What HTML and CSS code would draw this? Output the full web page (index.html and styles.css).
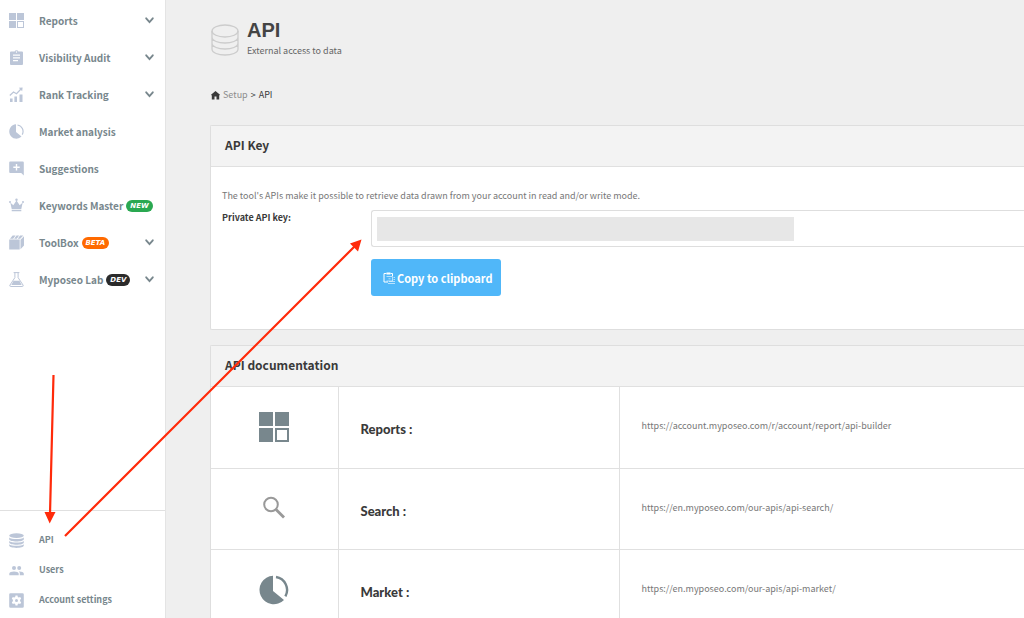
FILE: index.html
```html
<!DOCTYPE html>
<html lang="en">
<head>
  <meta charset="UTF-8" />
  <meta name="viewport" content="width=device-width, initial-scale=1.0"/>
  <title>API - Setup</title>
  <link rel="stylesheet" href="styles.css">
</head>
<body>

  <!-- shared icons -->
  <svg class="defs" aria-hidden="true">
    <symbol id="i-reports" viewBox="0 0 30 30">
      <path d="M0 0h14v14H0zM16 0h14v14H16zM0 16h14v14H0z"/>
      <path fill-rule="evenodd" d="M16 16h14v14H16zm2 2v10h10V18z"/>
    </symbol>
    <symbol id="i-pie" viewBox="0 0 30 30">
      <path d="M14 0.700V16L25 25A14.300 14.300 0 1 1 14 0.700z"/>
      <path d="M17 2A13.100 13.100 0 0 1 26.400 21.300" fill="none" stroke="currentColor" stroke-width="2.400"/>
    </symbol>
    <symbol id="i-chevron" viewBox="0 0 10 10">
      <path d="M2 3l3 3.400L8 3" fill="none" stroke="currentColor" stroke-width="1.700" stroke-linecap="round"/>
    </symbol>
  </svg>

  <div class="app">
    <aside class="sidebar">
      <nav class="menu">
        <a href="#"><svg class="icon"><use href="#i-reports"/></svg>Reports<svg class="chevron"><use href="#i-chevron"/></svg></a>
        <a href="#">
          <svg class="icon" viewBox="0 0 15 15"><path fill-rule="evenodd" d="M2 1.600h3.600a2 2 0 0 1 3.800 0H13a1 1 0 0 1 1 1V14a1 1 0 0 1-1 1H2a1 1 0 0 1-1-1V2.600a1 1 0 0 1 1-1zM4 4.500v1.300h7V4.500zM4 7.200v1.300h7V7.200zM4 10v1.300h5V10zM7.500 1.300a.7.7 0 1 0 .01 0z"/></svg>Visibility Audit<svg class="chevron"><use href="#i-chevron"/></svg></a>
        <a href="#">
          <svg class="icon" viewBox="0 0 15 15"><path d="M1 11.500h2.600V15H1zM5.400 9.500H8V15H5.400zM10.500 7.500h3V15h-3z"/><path d="M.8 8.500L4.500 5l3 1.700L12 2" fill="none" stroke="currentColor" stroke-width="1.200"/><path d="M9.800.8L13.600.4l-.4 3.800z"/></svg>Rank Tracking<svg class="chevron"><use href="#i-chevron"/></svg></a>
        <a href="#"><svg class="icon"><use href="#i-pie"/></svg>Market analysis</a>
        <a href="#">
          <svg class="icon" viewBox="0 0 15 15"><path fill-rule="evenodd" d="M1.200.500h12.600a1 1 0 0 1 1 1V14.500l-2.600-2.600H1.200a1 1 0 0 1-1-1V1.500a1 1 0 0 1 1-1zM6.800 3v2.500H4.300v1.400h2.500v2.500h1.400V6.900h2.500V5.500H8.200V3z"/></svg>Suggestions</a>
        <a href="#">
          <svg class="icon" viewBox="0 0 15 15"><path d="M1.300 4.600l3 2.600L7.500 2.500l3.200 4.700 3-2.600-1.400 6.300H2.700zM2.700 11.700h9.600v1.500H2.700z"/><circle cx="1" cy="4" r="1"/><circle cx="7.500" cy="1.800" r="1.200"/><circle cx="14" cy="4" r="1"/></svg>Keywords Master<span class="tag tag-new">NEW</span></a>
        <a href="#">
          <svg class="icon" viewBox="0 0 15 15"><path d="M.2 4.600h10.500V14.500H.2zM1 3.800L3.600.600h3L4.200 3.800zM5.200 3.800L7.500.600h2.600L7.800 3.800zM8.800 3.800L11 .600h3.300L11.200 3.800zM11.500 4.800L15 1.200v9.300l-3.500 3.700z"/></svg>ToolBox<span class="tag tag-beta">BETA</span><svg class="chevron"><use href="#i-chevron"/></svg></a>
        <a href="#">
          <svg class="icon" viewBox="0 0 15 15"><path d="M4.600.600h5.800M5.900.600v5L1 13a1 1 0 0 0 .8 1.500h11.400A1 1 0 0 0 14 13L9.100 5.600v-5" fill="none" stroke="currentColor"/><path d="M4.600 8.800h5.800l2.300 4.200H2.300z"/></svg>Myposeo Lab<span class="tag tag-dev">DEV</span><svg class="chevron"><use href="#i-chevron"/></svg></a>
      </nav>

      <nav class="menu menu-bottom">
        <a href="#">
          <svg class="icon" viewBox="0 0 15 15"><ellipse cx="7.500" cy="2.600" rx="7.300" ry="2.400"/><path d="M.2 4.400c2 2 12.600 2 14.600 0v1.800c0 3-14.600 3-14.600 0zM.2 8c2 2 12.600 2 14.600 0v1.500c0 3-14.600 3-14.600 0zM.2 11.200c2 2 12.600 2 14.600 0v1.300c0 3.200-14.600 3.200-14.600 0z"/></svg>API</a>
        <a href="#">
          <svg class="icon" viewBox="0 0 15 15"><circle cx="5" cy="5" r="2"/><circle cx="10.200" cy="5" r="2"/><path d="M.3 12.200V10.500C.3 7.700 9.700 7.700 9.700 10.500v1.700zM10.800 12.200v-1.700c0-.9-.4-1.500-1-2 2.300-.2 5 .5 5 2v1.700z"/></svg>Users</a>
        <a href="#">
          <svg class="icon" viewBox="0 0 15 15"><path fill-rule="evenodd" d="M1.500.200h12a1.300 1.300 0 0 1 1.300 1.300v12a1.300 1.300 0 0 1-1.300 1.300h-12A1.300 1.300 0 0 1 .2 13.500v-12A1.300 1.300 0 0 1 1.500.200zM6.500 2.500l-.3 1.400-1 .6-1.400-.5-1 1.800L3.900 6.800v1.400L2.800 9.200l1 1.800 1.400-.5 1 .6.3 1.400h2l.3-1.400 1-.6 1.400.5 1-1.800-1.100-1V6.800l1.100-1-1-1.800-1.400.5-1-.6-.3-1.400z"/><circle cx="7.500" cy="7.500" r="1.500"/></svg>Account settings</a>
      </nav>
    </aside>

    <main class="content">
      <header class="page-head">
        <svg class="page-icon" viewBox="0 0 28 32" fill="none" stroke="currentColor" stroke-width="1.300"><ellipse cx="14" cy="7" rx="13" ry="6"/><path d="M1 7v18c0 8 26 8 26 0V7M1 13c0 8 26 8 26 0M1 19c0 8 26 8 26 0"/></svg>
        <div>
          <h1>API</h1>
          <p>External access to data</p>
        </div>
      </header>

      <div class="breadcrumb">
        <svg class="home" viewBox="0 0 9 9"><path d="M4.500 0L9 3.800 8.200 4.600V8.500H5.500V5.500h-2v3H.8V4.600L0 3.800z"/></svg>
        <a href="#">Setup</a> &gt; <span>API</span>
      </div>

      <section class="panel">
        <h2>API Key</h2>
        <div class="panel-body">
          <p>The tool's APIs make it possible to retrieve data drawn from your account in read and/or write mode.</p>
          <div class="key-row">
            <label for="api-key">Private API key:</label>
            <div class="key-controls">
              <input type="text" id="api-key" readonly>
              <button type="button">
                <svg class="clip" viewBox="0 0 12 12" fill="none" stroke="currentColor"><path d="M3.500 1.500H1v8.500h4M7.500 1.500h2V4"/><path d="M3.500.500h4v2h-4z" fill="currentColor" stroke="none"/><path d="M3.500 4.500h6v4.500h-6M5.500 6.800h2M6 9.500h6M5 11.500h7M10.500 5.500H12M10.500 7.500H12" stroke-width=".6"/></svg>
                Copy to clipboard
              </button>
            </div>
          </div>
        </div>
      </section>

      <section class="panel">
        <h2>API documentation</h2>
        <table>
          <tr>
            <td class="doc-icon"><svg viewBox="0 0 30 30"><use href="#i-reports"/></svg></td>
            <th scope="row">Reports :</th>
            <td><a href="#">https://account.myposeo.com/r/account/report/api-builder</a></td>
          </tr>
          <tr>
            <td class="doc-icon search"><svg viewBox="0 0 30 30" fill="none" stroke="currentColor"><circle cx="12" cy="10.500" r="6.800" stroke-width="2"/><path d="M17 15.500l8 8" stroke-width="2.800"/></svg></td>
            <th scope="row">Search :</th>
            <td><a href="#">https://en.myposeo.com/our-apis/api-search/</a></td>
          </tr>
          <tr>
            <td class="doc-icon"><svg viewBox="0 0 30 30"><use href="#i-pie"/></svg></td>
            <th scope="row">Market :</th>
            <td><a href="#">https://en.myposeo.com/our-apis/api-market/</a></td>
          </tr>
        </table>
      </section>
    </main>
  </div>

  <!-- guide arrows -->
  <svg class="arrows" aria-hidden="true">
    <path d="M53.500 375L50 514M65 536L356 245" fill="none" stroke="currentColor" stroke-width="2.200"/>
    <path d="M44.500 512h11L49.700 523.500zM361.500 239.500l-11.500 4 8 8z"/>
  </svg>

</body>
</html>
```
FILE: styles.css
```css
* {
  box-sizing: border-box;
}

body {
  margin: 0;
  font-family: "Noto Sans CJK SC", "Noto Sans", sans-serif;
  font-size: 9px;
  line-height: 16px;
  color: #3a3a3a;
  background: #efefef;
}

a {
  color: inherit;
  text-decoration: none;
}

svg {
  fill: currentColor;
}

.defs {
  display: none;
}

.app {
  display: flex;
  height: 100vh;
}

/* sidebar */
.sidebar {
  display: flex;
  flex-direction: column;
  flex: 0 0 166px;
  background: #fff;
  border-right: 1px solid #e4e4e4;
}

.menu {
  padding-top: 2px;
}

.menu a {
  display: flex;
  align-items: center;
  height: 37px;
  padding: 0 10px 0 9px;
  font-size: 10px;
  font-weight: bold;
  white-space: nowrap;
  color: #78878d;
}

.menu-bottom {
  margin-top: auto;
  padding: 14px 0 3px;
  border-top: 1px solid #e0e0e0;
}

.menu-bottom a {
  height: 30px;
  font-size: 9px;
}

.icon {
  flex: none;
  width: 15px;
  height: 15px;
  margin-right: 15px;
  color: #bcc6d8;
}

.chevron {
  width: 11px;
  height: 11px;
  margin-left: auto;
}

.tag {
  margin-left: 3px;
  padding: 0 4px;
  border-radius: 6px;
  font: italic bold 7px/12px "DejaVu Sans", sans-serif;
  color: #fff;
}

.tag-new {
  background: #2aa851;
}

.tag-beta {
  background: #ff6a00;
}

.tag-dev {
  background: #2b2b2b;
}

/* content */
.content {
  flex: 1;
  min-width: 0;
  padding: 18px 0 0 44px;
  overflow-y: auto;
  scrollbar-width: none;
}

.page-head {
  display: flex;
  gap: 8px;
  color: #666;
}

.page-icon {
  width: 28px;
  height: 32px;
  margin: 6px 0 0 1px;
  color: #ccc;
}

h1 {
  margin: 0;
  font: bold 20px/24px "Liberation Sans", sans-serif;
  color: #444;
}

.page-head p {
  margin: 0;
  line-height: 18px;
}

.breadcrumb {
  display: flex;
  align-items: center;
  gap: 3px;
  margin: 27px 0 22px 1px;
}

.breadcrumb a {
  color: #8c8c8c;
}

.home {
  width: 9px;
  height: 9px;
}

.panel {
  margin-bottom: 15px;
  background: #fff;
  border: 1px solid #dedede;
  border-right: none;
  border-radius: 2px 0 0 2px;
}

h2 {
  margin: 0;
  padding: 0 14px 2px;
  font-size: 12px;
  line-height: 38px;
  background: #f3f3f3;
  border-bottom: 1px solid #e0e0e0;
}

.panel-body {
  padding: 21px 0 33px 11px;
}

.panel-body p {
  margin: 0 0 6px;
  color: #777;
}

.key-row {
  display: flex;
}

.key-row label {
  flex: 0 0 149px;
  font-weight: bold;
}

.key-controls {
  flex: 1;
}

#api-key {
  display: block;
  width: 100%;
  height: 37px;
  margin-bottom: 12px;
  border: 1px solid #dedede;
  border-right: none;
  border-radius: 3px 0 0 3px;
  outline: none;
  background: #fff linear-gradient(#e7e7e7, #e7e7e7) no-repeat 5px center / 417px 24px;
}

button {
  display: flex;
  align-items: center;
  gap: 2px;
  height: 37px;
  padding: 0 9px 0 12px;
  border: none;
  border-radius: 3px;
  font: bold 11px/16px "Noto Sans CJK SC", "Noto Sans", sans-serif;
  color: #fff;
  background: #50b7f9;
}

/* documentation table */
table {
  width: 100%;
  border-collapse: collapse;
  table-layout: fixed;
}

tr + tr {
  border-top: 1px solid #e0e0e0;
}

th,
td {
  height: 81px;
  padding: 0 22px;
  text-align: left;
}

th {
  width: 281px;
  padding-top: 4px;
  font: 900 13px/16px Lato, sans-serif;
  border-left: 1px solid #e0e0e0;
  border-right: 1px solid #e0e0e0;
}

td {
  padding-bottom: 2px;
  color: #777;
}

.doc-icon {
  width: 127px;
  padding-bottom: 0;
  color: #78878d;
}

.doc-icon svg {
  display: block;
  width: 30px;
  height: 30px;
  margin: 0 auto;
}

.search {
  color: #999;
}

.search svg,
.page-icon,
.clip {
  fill: none;
}

.clip {
  width: 12px;
  height: 12px;
}

.arrows {
  position: absolute;
  top: 0;
  left: 0;
  width: 400px;
  height: 560px;
  color: #ff2a0a;
  pointer-events: none;
}
```
